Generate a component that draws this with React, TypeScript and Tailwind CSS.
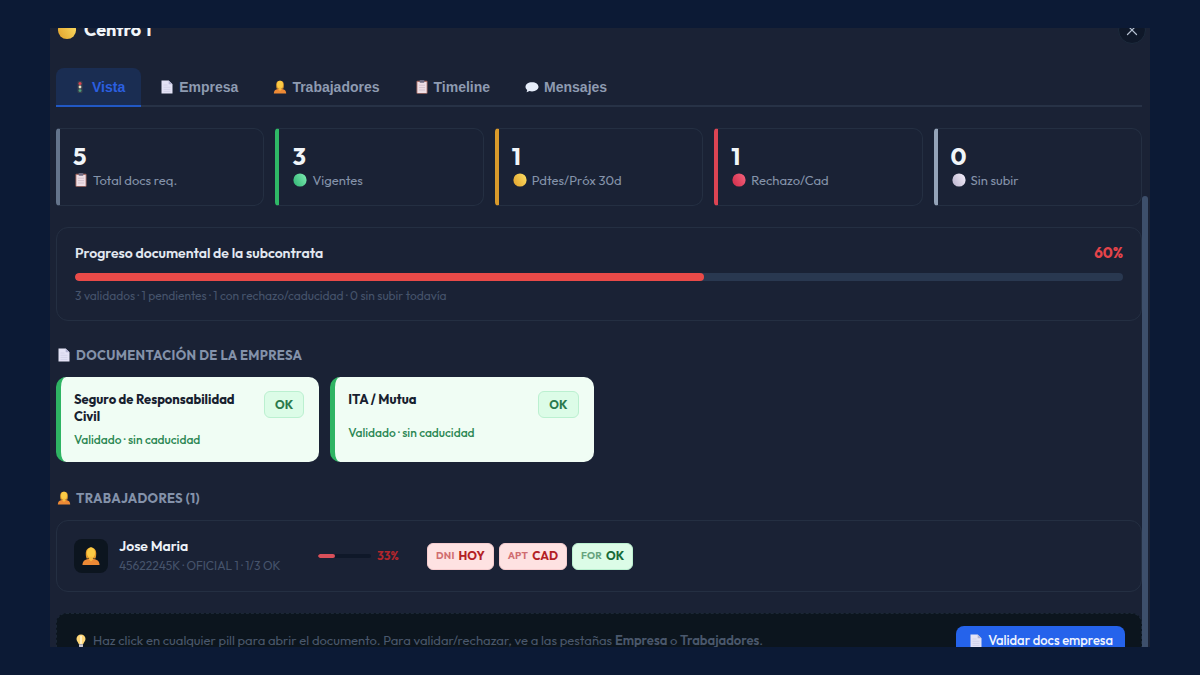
import { X } from 'lucide-react';
import { useState } from 'react';
import type { ReactNode } from 'react';

type IconName =
  | 'light'
  | 'page'
  | 'person'
  | 'clipboard'
  | 'bubble'
  | 'bulb'
  | 'green'
  | 'yellow'
  | 'red'
  | 'white';

const DOTS: Partial<Record<IconName, [string, string]>> = {
  green: ['#7beab0', '#35b877'],
  yellow: ['#fbdc62', '#e3a52f'],
  red: ['#f2607a', '#d32f4c'],
  white: ['#f4eefa', '#bdb6cf'],
};

const SHAPES: Partial<Record<IconName, ReactNode>> = {
  light: (
    <>
      <rect x="5.5" y="2" width="5" height="12" rx="1.5" fill="#39404f" />
      <circle cx="8" cy="4.4" r="1.5" fill="#d8424f" />
      <circle cx="8" cy="8" r="1.4" fill="#e8dcc0" />
      <circle cx="8" cy="11.6" r="1.4" fill="#4fa07c" />
    </>
  ),
  page: (
    <>
      <path d="M2.5 1.5h7.2l3.8 3.8v9.2h-11z" fill="#e4e3f6" />
      <path d="M9.7 1.5v3.8h3.8z" fill="#b3b4d2" />
      <path d="M4.5 6h4M4.5 8.3h7M4.5 10.4h7M4.5 12.4h7" stroke="#cfcfe6" strokeWidth=".8" />
    </>
  ),
  person: (
    <>
      <path d="M1.8 14.6c0-2.8 1.5-4.1 4.2-4.5h4c2.7.4 4.2 1.7 4.2 4.5z" fill="#ee8a35" />
      <path d="M4.8 9.8c-.5-1-.6-2.6-.6-4A3.8 4 0 0 1 11.8 5.8c0 1.4-.1 3-.6 4z" fill="#e39a2c" />
      <ellipse cx="8" cy="5.6" rx="3" ry="3.9" fill="#fbcb45" />
      <path d="M6.6 8.6h2.8v2L8 12l-1.4-1.4z" fill="#f7b93f" />
    </>
  ),
  clipboard: (
    <>
      <rect x="2.5" y="1.8" width="11" height="13" rx="1" fill="#a97068" />
      <rect x="3.4" y="3" width="9.2" height="11" fill="#efdfe6" />
      <rect x="5.6" y="1" width="4.8" height="2.8" rx=".7" fill="#6f6a80" />
      <path d="M5 6.2h6M5 8.6h6M5 11h6" stroke="#cdbac6" strokeWidth=".8" />
    </>
  ),
  bubble: (
    <path
      d="M8 3.2c3.8 0 6.5 2 6.5 4.6S11.8 12.4 8 12.4c-.9 0-1.8-.1-2.5-.3L2.6 13.3l.6-2.3C2.1 10.2 1.5 9.1 1.5 7.8 1.5 5.2 4.2 3.2 8 3.2z"
      fill="#e6edfa"
    />
  ),
  bulb: (
    <>
      <path
        d="M8 1.5a4.5 4.5 0 0 1 4.5 4.5c0 2.3-1.9 3.2-2.3 5.3H5.8C5.4 9.2 3.5 8.3 3.5 6A4.5 4.5 0 0 1 8 1.5z"
        fill="#ffd778"
      />
      <path d="M8 3.2v7" stroke="#fff5d6" strokeWidth="1.6" strokeLinecap="round" />
      <path d="M6 11.3h4v2.3l-1 1.2H7l-1-1.2z" fill="#c9c6cf" />
    </>
  ),
};

function Icon({ name, className = 'size-4' }: { name: IconName; className?: string }) {
  const dot = DOTS[name];
  return (
    <svg viewBox="0 0 16 16" className={`shrink-0 ${className}`} aria-hidden="true">
      {dot ? (
        <>
          <defs>
            <linearGradient id={`dot-${name}`} x1="1" y1="0.2" x2="0" y2="0.8">
              <stop offset="0" stopColor={dot[0]} />
              <stop offset="1" stopColor={dot[1]} />
            </linearGradient>
          </defs>
          <circle cx="8" cy="8" r="6.6" fill={`url(#dot-${name})`} />
        </>
      ) : (
        SHAPES[name]
      )}
    </svg>
  );
}

const TABS: { label: string; icon: IconName }[] = [
  { label: 'Vista', icon: 'light' },
  { label: 'Empresa', icon: 'page' },
  { label: 'Trabajadores', icon: 'person' },
  { label: 'Timeline', icon: 'clipboard' },
  { label: 'Mensajes', icon: 'bubble' },
];

const STATS: { value: number; label: string; icon: IconName; border: string }[] = [
  { value: 5, label: 'Total docs req.', icon: 'clipboard', border: 'border-l-[#64748b]' },
  { value: 3, label: 'Vigentes', icon: 'green', border: 'border-l-[#2fb866]' },
  { value: 1, label: 'Pdtes/Próx 30d', icon: 'yellow', border: 'border-l-[#d99a2b]' },
  { value: 1, label: 'Rechazo/Cad', icon: 'red', border: 'border-l-[#dc4453]' },
  { value: 0, label: 'Sin subir', icon: 'white', border: 'border-l-[#94a3b8]' },
];

const COMPANY_DOCS = ['Seguro de Responsabilidad Civil', 'ITA / Mutua'];

const PILLS = [
  { code: 'DNI', status: 'HOY', color: 'border-[#f6cdcf] bg-[#fee2e2] text-[#b32025]' },
  { code: 'APT', status: 'CAD', color: 'border-[#f6cdcf] bg-[#fee2e2] text-[#b32025]' },
  { code: 'FOR', status: 'OK', color: 'border-[#bbf0d0] bg-[#dcfce7] text-[#166b39]' },
];

function SectionTitle({ icon, children }: { icon: IconName; children: ReactNode }) {
  return (
    <h2 className="flex items-center gap-1 text-[13px] leading-5 font-bold tracking-wide text-[#8492aa] uppercase">
      <Icon name={icon} />
      {children}
    </h2>
  );
}

export default function App() {
  const [tab, setTab] = useState('Vista');

  return (
    <div className="h-screen bg-[#0c1a35] px-[50px] py-7 font-[Outfit,Lato,sans-serif]">
      <main className="relative h-full overflow-hidden bg-[#1a2235] pr-2 pl-1.5">
        {/* Header */}
        <header className="-mt-3 flex h-7 items-center justify-between">
          <h1 className="flex items-center gap-1.5 text-lg font-bold text-[#f1f5f9]">
            <Icon name="yellow" className="size-[22px]" />
            Centro 1
          </h1>
          <button
            aria-label="Cerrar"
            className="-mr-1 flex size-7 items-center justify-center rounded-full border border-[#1c2a3c] bg-[#0f1829] text-[#b4bfd0]"
          >
            <X size={18} strokeWidth={1.6} />
          </button>
        </header>

        {/* Tabs */}
        <nav className="mt-6 flex gap-0.5 border-b-2 border-[#273246] font-['Liberation_Sans',Arial,sans-serif]">
          {TABS.map((t) => (
            <button
              key={t.label}
              onClick={() => setTab(t.label)}
              className={`-mb-0.5 flex h-[39px] items-center gap-1 rounded-t-lg border-b-2 px-4 text-sm font-bold ${
                tab === t.label
                  ? 'border-[#2158c4] bg-[#1a2d52] text-[#2b5fe0]'
                  : 'border-transparent text-[#8e9bb1]'
              }`}
            >
              <Icon name={t.icon} />
              {t.label}
            </button>
          ))}
        </nav>

        {/* Stats */}
        <section className="mt-[21px] grid grid-cols-5 gap-[11px]">
          {STATS.map((s) => (
            <div
              key={s.label}
              className={`rounded-l-sm rounded-r-[10px] border border-l-4 border-[#242f42] px-[13px] py-[15px] ${s.border}`}
            >
              <p className="text-2xl leading-6 font-bold text-[#f1f5f9]">{s.value}</p>
              <p className="mt-0.5 flex items-center gap-1 text-[13px] leading-5 text-[#8593aa]">
                <Icon name={s.icon} />
                {s.label}
              </p>
            </div>
          ))}
        </section>

        {/* Overall progress */}
        <section className="mt-[21px] rounded-xl border border-[#242f42] px-[18px] pt-[15px] pb-4">
          <div className="flex justify-between leading-5">
            <h2 className="text-sm leading-5 font-semibold text-[#e2e8f0]">
              Progreso documental de la subcontrata
            </h2>
            <span className="text-[15px] font-bold text-[#e5444a]">60%</span>
          </div>
          <div className="mt-2.5 h-2 overflow-hidden rounded-full bg-[#293850]">
            <div className="h-full rounded-full bg-[#e94a48]" style={{ width: '60%' }} />
          </div>
          <p className="mt-[7px] text-xs leading-4 text-[#46546c]">
            3 validados · 1 pendientes · 1 con rechazo/caducidad · 0 sin subir todavía
          </p>
        </section>

        {/* Company documents */}
        <section className="mt-6">
          <SectionTitle icon="page">Documentación de la empresa</SectionTitle>
          <div className="mt-3 grid grid-cols-4 gap-[11px]">
            {COMPANY_DOCS.map((doc) => (
              <article
                key={doc}
                className="rounded-[10px] border-l-[5px] border-[#2fb463] bg-[#f0fdf4] pt-3.5 pr-[15px] pb-3.5 pl-[13px]"
              >
                <div className="flex items-start justify-between gap-2">
                  <h3 className="text-[13px] leading-[17px] font-bold text-[#17212f]">{doc}</h3>
                  <span className="rounded-md border border-[#bbf0d0] bg-[#dcfce7] px-2.5 text-xs leading-[25px] font-bold text-[#2b7a4d]">
                    OK
                  </span>
                </div>
                <p className="mt-[7px] text-xs leading-4 font-medium text-[#2c8753]">Validado · sin caducidad</p>
              </article>
            ))}
          </div>
        </section>

        {/* Workers */}
        <section className="mt-[26px]">
          <SectionTitle icon="person">Trabajadores (1)</SectionTitle>
          <article className="mt-3 flex items-center rounded-xl border border-[#242f42] px-[17px] py-4">
            <div className="flex size-[34px] shrink-0 items-center justify-center rounded-lg bg-[#0c151f]">
              <Icon name="person" className="size-[22px]" />
            </div>
            <div className="ml-[11px] w-[199px]">
              <p className="text-sm leading-[19px] font-semibold text-[#edf2f8]">Jose Maria</p>
              <p className="text-xs leading-[19px] text-[#46546c]">45622245K · OFICIAL 1 · 1/3 OK</p>
            </div>
            <div className="flex w-[109px] items-center gap-1.5">
              <div className="h-1 w-[53px] overflow-hidden rounded-full bg-[#0f1829]">
                <div className="h-full rounded-full bg-[#d9505a]" style={{ width: '33%' }} />
              </div>
              <span className="text-xs font-bold text-[#b3262c]">33%</span>
            </div>
            <div className="flex gap-[5px]">
              {PILLS.map((p) => (
                <button
                  key={p.code}
                  className={`flex h-[27px] items-center gap-1 rounded-md border px-2 text-xs font-bold ${p.color}`}
                >
                  <span className="text-[10px] tracking-wide opacity-60">{p.code}</span>
                  {p.status}
                </button>
              ))}
            </div>
          </article>
        </section>

        {/* Hint and action */}
        <footer className="mt-[21px] flex items-center justify-between rounded-[10px] border border-dashed border-[#1b2736] bg-[#0c151e] px-4 py-3">
          <p className="flex items-center gap-1 text-[13px] text-[#4a586d]">
            <Icon name="bulb" />
            <span>
              Haz click en cualquier pill para abrir el documento. Para validar/rechazar, ve a las pestañas{' '}
              <b className="font-semibold">Empresa</b> o <b className="font-semibold">Trabajadores</b>.
            </span>
          </p>
          <button className="flex h-[29px] items-center gap-1 rounded-lg bg-[#2563eb] px-3 text-[13px] font-medium text-[#f0f5ff]">
            <Icon name="page" />
            Validar docs empresa
          </button>
        </footer>

        {/* Scroll thumb */}
        <div className="absolute top-[168px] right-0.5 bottom-0 w-1.5 rounded-t-full bg-[#3d4f6b]" />
      </main>
    </div>
  );
}
